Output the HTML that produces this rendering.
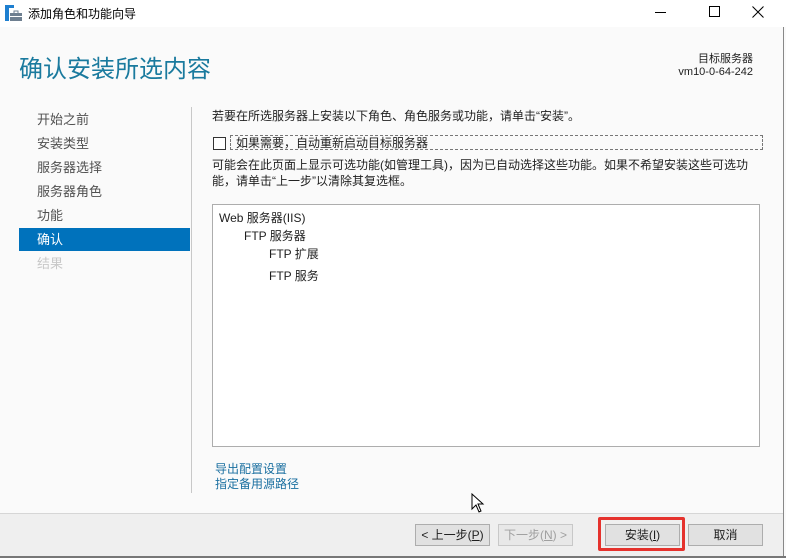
<!DOCTYPE html>
<html><head><meta charset="utf-8"><style>
*{margin:0;padding:0;box-sizing:border-box}
body{width:786px;height:558px;overflow:hidden;background:#fafafa;font-family:"Liberation Sans","Noto Sans CJK SC",sans-serif;font-size:12px;color:#1e1e1e;position:relative}
.a{position:absolute;white-space:nowrap}
.nav{left:37px;color:#505050;font-size:13px}
.btn{position:absolute;top:524px;height:22px;background:#e1e1e1;border:1px solid #adadad;font-size:12px;text-align:center;line-height:20px}
</style></head><body>
<div class="a" style="left:0;top:0;width:786px;height:27px;background:#fff"></div>
<svg class="a" style="left:5px;top:5px" width="18" height="16"><rect x="0" y="0" width="4" height="16" fill="#1e7fd0"/><rect x="0" y="0" width="9" height="3" fill="#1e7fd0"/><rect x="5" y="8" width="12" height="8" fill="#6e7f90"/><rect x="9" y="6" width="4" height="3" fill="none" stroke="#6e7f90"/><rect x="5" y="11" width="12" height="1" fill="#fff"/></svg>
<div class="a" style="left:28px;top:5px;font-size:12px;color:#000">添加角色和功能向导</div>
<div class="a" style="left:655px;top:12px;width:11px;height:1px;background:#000"></div>
<div class="a" style="left:709px;top:6px;width:11px;height:11px;border:1px solid #000"></div>
<svg class="a" style="left:752px;top:6px" width="12" height="12"><path d="M0.5 0.5 L11.5 11.5 M11.5 0.5 L0.5 11.5" stroke="#000" stroke-width="1"/></svg>
<div class="a" style="left:783px;top:27px;width:1px;height:531px;background:#888"></div>
<div class="a" style="left:19px;top:49px;font-size:24px;color:#1a7a9e">确认安装所选内容</div>
<div class="a" style="right:33px;top:53px;font-size:11px;text-align:right;line-height:13px">目标服务器<br>vm10-0-64-242</div>
<div class="a nav" style="top:109px">开始之前</div>
<div class="a nav" style="top:133px">安装类型</div>
<div class="a nav" style="top:157px">服务器选择</div>
<div class="a nav" style="top:181px">服务器角色</div>
<div class="a nav" style="top:205px">功能</div>
<div class="a" style="left:19px;top:228px;width:171px;height:23px;background:#0072bc"></div>
<div class="a nav" style="top:229px;color:#fff">确认</div>
<div class="a nav" style="top:253px;color:#c8c8c8">结果</div>
<div class="a" style="left:191px;top:107px;width:1px;height:386px;background:#c8c8c8"></div>
<div class="a" style="left:212px;top:107px">若要在所选服务器上安装以下角色、角色服务或功能，请单击“安装”。</div>
<div class="a" style="left:213px;top:137px;width:13px;height:13px;border:1px solid #333;background:#fff"></div>
<div class="a" style="left:230px;top:135px;width:533px;height:15px;border:1px dashed #777"></div>
<div class="a" style="left:236px;top:134px">如果需要，自动重新启动目标服务器</div>
<div class="a" style="left:212px;top:157px;line-height:16px">可能会在此页面上显示可选功能(如管理工具)，因为已自动选择这些功能。如果不希望安装这些可选功<br>能，请单击“上一步”以清除其复选框。</div>
<div class="a" style="left:212px;top:204px;width:548px;height:243px;border:1px solid #adadad;background:#fff"></div>
<div class="a" style="left:219px;top:209px;font-size:12px">Web 服务器(IIS)</div>
<div class="a" style="left:244px;top:227px">FTP 服务器</div>
<div class="a" style="left:269px;top:245px">FTP 扩展</div>
<div class="a" style="left:269px;top:267px">FTP 服务</div>
<div class="a" style="left:215px;top:462px;color:#1a6fa0;line-height:15px">导出配置设置<br>指定备用源路径</div>
<svg class="a" style="left:471px;top:493px" width="16" height="22"><path d="M1 1 L1 16 L5 12 L8 19 L10 18 L7 11 L12 11 Z" fill="#fff" stroke="#000"/></svg>
<div class="a" style="left:0;top:513px;width:783px;height:43px;background:#efefef;border-top:1px solid #d6d6d6"></div>
<div class="a" style="left:0;top:556px;width:786px;height:2px;background:#777"></div>
<div class="btn" style="left:415px;width:75px">&lt; 上一步(<u>P</u>)</div>
<div class="btn" style="left:498px;width:75px;color:#a0a0a0;border-color:#c8c8c8;background:#e8e8e8">下一步(<u>N</u>) &gt;</div>
<div class="a" style="left:598px;top:517px;width:87px;height:34px;border:3px solid #e5322d;border-radius:2px"></div>
<div class="btn" style="left:605px;width:75px">安装(<u>I</u>)</div>
<div class="btn" style="left:688px;width:75px">取消</div>
</body></html>
